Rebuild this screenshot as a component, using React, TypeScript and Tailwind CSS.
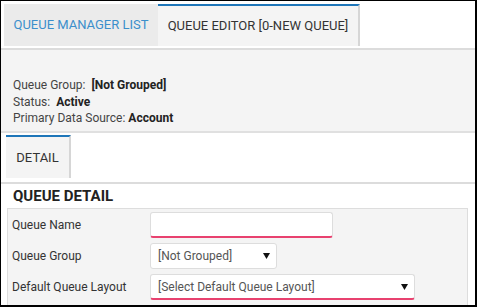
import React from "react";

function Arrow() {
  return (
    <svg width="7" height="6" viewBox="0 0 7 6" className="shrink-0">
      <path d="M0 0 L7 0 L3.5 6 Z" fill="#111" />
    </svg>
  );
}

export default function App() {
  return (
    <div className="w-[477px] h-[307px] overflow-hidden bg-white border-t border-l border-r-2 border-b-2 border-black box-border font-['Roboto',sans-serif]">
      {/* top tabs */}
      <div className="h-[49px] box-border border-b-2 border-[#dcdcdc] flex items-start pt-[3px] pl-[3px]">
        <div className="w-[154px] h-[42px] bg-[#ebebeb] text-[#3b8fcb] text-[13px] flex items-center justify-center">
          QUEUE MANAGER LIST
        </div>
        <div className="w-[202px] h-[42px] box-border bg-[#f4f4f4] border-t-2 border-t-[#1e76b9] border-r-2 border-r-[#d6d6d6] text-[#333] text-[13px] flex items-center justify-center">
          QUEUE EDITOR [0-NEW QUEUE]
        </div>
      </div>

      {/* info panel */}
      <div className="h-[83px] box-border bg-[#f4f4f4] border-b-2 border-[#e0e0e0] pl-[12px] pt-[27px] text-[12px] leading-[16.5px] text-[#444]">
        <div>
          Queue Group:<span className="ml-[6px] font-bold text-[#222]">[Not Grouped]</span>
        </div>
        <div>
          Status:<span className="ml-[6px] font-bold text-[#222]">Active</span>
        </div>
        <div>
          Primary Data Source: <span className="font-bold text-[#222]">Account</span>
        </div>
      </div>

      {/* detail tab */}
      <div className="h-[51px] box-border border-b-2 border-[#dcdcdc] pt-[2px] pl-[5px]">
        <div className="w-[65px] h-[43px] box-border bg-[#f4f4f4] border-t-2 border-t-[#1e76b9] border-r-2 border-r-[#d6d6d6] text-[#333] text-[13px] flex items-center justify-center">
          DETAIL
        </div>
      </div>

      {/* heading */}
      <div className="h-[24px] flex items-center pl-[12px] text-[15px] font-bold text-[#222]">
        QUEUE DETAIL
      </div>

      {/* form */}
      <div className="ml-[6px] w-[461px] h-[120px] box-border border border-[#dddddd] bg-[#f4f4f4] pt-[3px] pl-[4px] flex flex-col gap-[5px] text-[12px]">
        <div className="flex items-center h-[26px]">
          <div className="w-[138px] text-[#333]">Queue Name</div>
          <div className="w-[183px] h-[26px] box-border bg-white border border-[#dddddd] border-b-2 border-b-[#e8416f] rounded-[3px]" />
        </div>
        <div className="flex items-center h-[26px]">
          <div className="w-[138px] text-[#333]">Queue Group</div>
          <div className="w-[127px] h-[26px] box-border bg-white border border-[#dddddd] rounded-[3px] flex items-center justify-between pl-[7px] pr-[6px] text-[#555]">
            <span>[Not Grouped]</span>
            <Arrow />
          </div>
        </div>
        <div className="flex items-center h-[26px]">
          <div className="w-[138px] text-[#333]">Default Queue Layout</div>
          <div className="w-[265px] h-[26px] box-border bg-white border border-[#dddddd] border-b-2 border-b-[#e8416f] rounded-[3px] flex items-center justify-between pl-[7px] pr-[6px] text-[#555]">
            <span>[Select Default Queue Layout]</span>
            <Arrow />
          </div>
        </div>
      </div>
    </div>
  );
}
